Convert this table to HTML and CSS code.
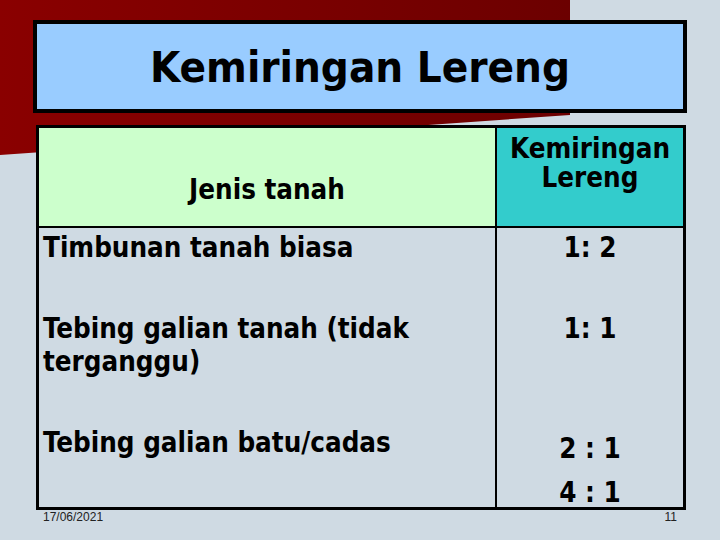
FILE: index.html
```html
<!DOCTYPE html>
<html lang="id">
<head>
<meta charset="utf-8">
<title>Kemiringan Lereng</title>
<link rel="stylesheet" href="styles.css">
</head>
<body>
<div class="slide">
  <svg class="bg-shape" width="720" height="540" viewBox="0 0 720 540" aria-hidden="true">
    <defs>
      <linearGradient id="redgrad" x1="0" y1="0" x2="1" y2="0">
        <stop offset="0" stop-color="#8a0000"/>
        <stop offset="1" stop-color="#6c0000"/>
      </linearGradient>
    </defs>
    <polygon points="0,0 570,0 570,115 0,155" fill="url(#redgrad)"/>
  </svg>
  <header class="title-box"><h1 class="title">Kemiringan Lereng</h1></header>
  <div class="table">
    <div class="cell head-left">Jenis tanah</div>
    <div class="cell head-right">Kemiringan<br>Lereng</div>
    <div class="cell left">Timbunan tanah biasa</div>
    <div class="cell right">1: 2</div>
    <div class="cell left">Tebing galian tanah (tidak terganggu)</div>
    <div class="cell right">1: 1</div>
    <div class="cell left">Tebing galian batu/cadas</div>
    <div class="cell right tall">2 : 1<br>4 : 1</div>
  </div>
  <footer class="footer"><span>17/06/2021</span><span>11</span></footer>
</div>
</body>
</html>
```
FILE: styles.css
```css
html, body {
  margin: 0;
  padding: 0;
}
body {
  background: #cfdae3;
}
.slide {
  position: relative;
  width: 720px;
  height: 540px;
  overflow: hidden;
  background: #cfdae3;
  display: flex;
  flex-direction: column;
}
.bg-shape {
  position: absolute;
  left: 0;
  top: 0;
}
.title-box {
  position: relative;
  margin: 20px 0 0 33px;
  width: 654px;
  height: 93px;
  box-sizing: border-box;
  border: 4px solid #000;
  background: #99ccff;
  display: flex;
  align-items: center;
  justify-content: center;
}
.title {
  margin: 0;
  font-family: "DejaVu Sans", "Liberation Sans", sans-serif;
  font-stretch: condensed;
  font-weight: bold;
  font-size: 43.5px;
  line-height: 50px;
  color: #000;
}
.table {
  position: relative;
  margin: 12px 0 0 36px;
  width: 650px;
  height: 385px;
  box-sizing: border-box;
  border: 3px solid #000;
  display: grid;
  grid-template-columns: 458px 186px;
  grid-template-rows: 100px 81px 114px 84px;
  font-family: "DejaVu Sans", "Liberation Sans", sans-serif;
  font-stretch: condensed;
  font-weight: bold;
  font-size: 27.5px;
  color: #000;
}
.cell {
  box-sizing: border-box;
}
.head-left {
  background: #ccffcc;
  border-right: 2px solid #000;
  border-bottom: 2px solid #000;
  display: flex;
  align-items: flex-end;
  justify-content: center;
  padding-bottom: 22px;
  line-height: 30px;
}
.head-right {
  background: #33cccc;
  border-bottom: 2px solid #000;
  text-align: center;
  padding-top: 6px;
  line-height: 29px;
}
.left {
  border-right: 2px solid #000;
  padding: 3px 0 0 4px;
  line-height: 33px;
}
.right {
  text-align: center;
  padding-top: 3px;
  line-height: 33px;
}
.right.tall {
  line-height: 44px;
}
.footer {
  display: flex;
  justify-content: space-between;
  width: 650px;
  margin-left: 36px;
  box-sizing: border-box;
  padding: 0 9px 0 7px;
  font-family: "Liberation Sans", Arial, sans-serif;
  font-size: 12px;
  line-height: 14px;
  color: #222;
}
```
